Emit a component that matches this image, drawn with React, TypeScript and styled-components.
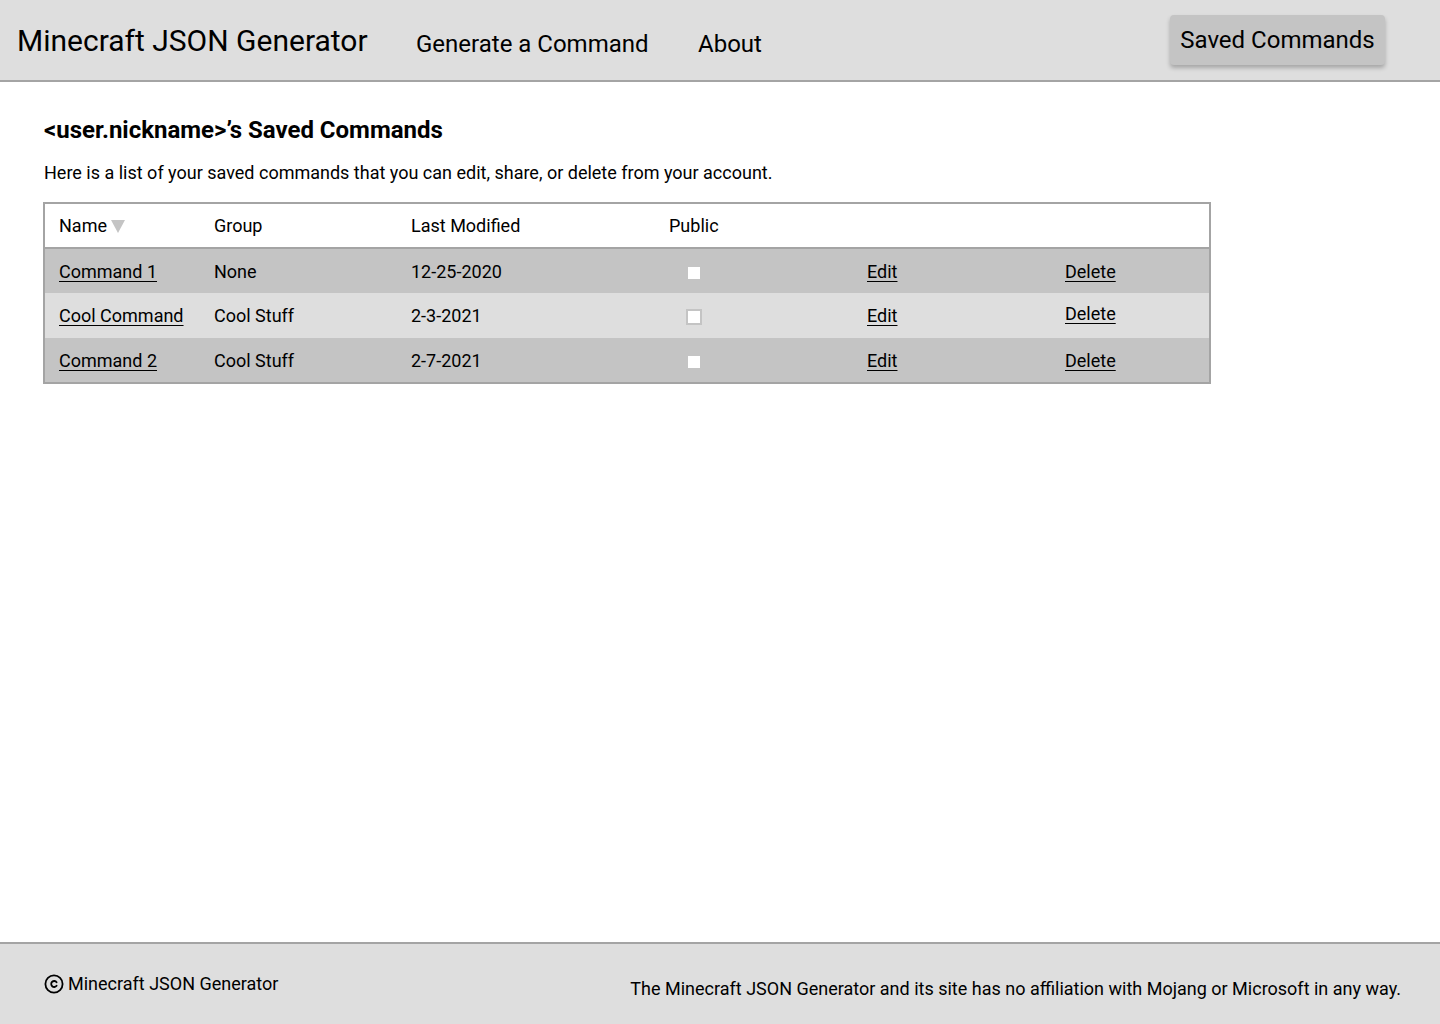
import React from 'react';
import styled, { createGlobalStyle } from 'styled-components';

const GlobalStyle = createGlobalStyle`
  html, body {
    margin: 0;
    padding: 0;
    background: #ffffff;
    font-family: Roboto, "Liberation Sans", sans-serif;
    color: #000000;
  }
  #root {
    min-height: 1024px;
  }
`;

const Page = styled.div`
  display: flex;
  flex-direction: column;
  min-height: 1024px;
`;

const Header = styled.header`
  display: flex;
  align-items: center;
  height: 80px;
  padding: 0 55px 0 17px;
  background: #dedede;
  border-bottom: 2px solid #a4a4a4;
  box-sizing: content-box;
`;

const Brand = styled.div`
  font-size: 30px;
  width: 399px;
  line-height: 1;
  margin-top: 2px;
  white-space: nowrap;
`;

const NavLink = styled.a`
  font-size: 24px;
  color: #000;
  text-decoration: none;
  margin-top: 7px;
  width: 282px;
  white-space: nowrap;
  &:last-of-type {
    width: auto;
  }
`;

const Spacer = styled.div`
  flex: 1;
`;

const SavedButton = styled.button`
  width: 215px;
  height: 50px;
  margin-top: 0;
  border: none;
  border-radius: 4px;
  background: #c4c4c4;
  box-shadow: 0 3px 4px rgba(0, 0, 0, 0.25);
  font-family: Roboto, "Liberation Sans", sans-serif;
  font-size: 24px;
  color: #000;
  padding: 0;
`;

const Main = styled.main`
  flex: 1;
  padding: 33px 44px 0 43px;
`;

const Title = styled.h1`
  margin: 0 0 0 1px;
  font-size: 24px;
  font-weight: 700;
  line-height: 30px;
`;

const Intro = styled.p`
  margin: 17px 0 18px 1px;
  font-size: 18px;
  line-height: 22px;
`;

const Table = styled.table`
  width: 1168px;
  table-layout: fixed;
  border-collapse: collapse;
  border: 2px solid #a4a4a4;
  font-size: 18px;
`;

const HeadRow = styled.tr`
  height: 45px;
  background: #ffffff;
  border-bottom: 2px solid #a4a4a4;
`;

const HeadCell = styled.th<{ $w?: number }>`
  text-align: left;
  font-weight: 400;
  padding: 0 0 0 14px;
  width: ${p => (p.$w ? `${p.$w}px` : 'auto')};
  box-sizing: border-box;
`;

const Row = styled.tr<{ $shade: 'dark' | 'light' }>`
  height: 45px;
  background: ${p => (p.$shade === 'dark' ? '#c4c4c4' : '#dedede')};
`;

const Cell = styled.td`
  padding: 0 0 0 14px;
  text-align: left;
  white-space: nowrap;
`;

const Link = styled.a<{ $raise?: boolean }>`
  color: #000;
  text-decoration: underline;
  text-underline-offset: 3px;
  position: relative;
  top: ${p => (p.$raise ? '-2px' : '0')};
`;

const SortArrow = styled.span`
  display: inline-block;
  width: 0;
  height: 0;
  margin-left: 4px;
  border-left: 7px solid transparent;
  border-right: 7px solid transparent;
  border-top: 13px solid #c4c4c4;
  vertical-align: -1px;
`;

const Check = styled.span<{ $outlined?: boolean }>`
  display: inline-block;
  width: 12px;
  height: 12px;
  background: #ffffff;
  border: ${p => (p.$outlined ? '2px solid #c4c4c4' : 'none')};
  margin-left: ${p => (p.$outlined ? '17px' : '19px')};
  vertical-align: middle;
`;

const Footer = styled.footer`
  display: flex;
  justify-content: space-between;
  align-items: center;
  height: 80px;
  padding: 0 39px 0 44px;
  background: #dedede;
  border-top: 2px solid #a4a4a4;
`;

const Copyright = styled.div`
  display: flex;
  align-items: center;
  gap: 4px;
  font-size: 18px;
  margin-top: -1px;
`;

const Disclaimer = styled.div`
  font-size: 18px;
  margin-top: 8px;
  white-space: nowrap;
`;

const rows = [
  { name: 'Command 1', group: 'None', date: '12-25-2020', shade: 'dark' as const },
  { name: 'Cool Command', group: 'Cool Stuff', date: '2-3-2021', shade: 'light' as const },
  { name: 'Command 2', group: 'Cool Stuff', date: '2-7-2021', shade: 'dark' as const },
];

const CopyIcon = () => (
  <svg width="20" height="20" viewBox="0 0 20 20">
    <circle cx="10" cy="10" r="8.6" fill="none" stroke="#000" strokeWidth="1.8" />
    <path
      d="M12.6 8.2 A3 3 0 1 0 12.6 11.8"
      fill="none"
      stroke="#000"
      strokeWidth="1.8"
      strokeLinecap="round"
    />
  </svg>
);

export default function App() {
  return (
    <Page>
      <GlobalStyle />
      <Header>
        <Brand>Minecraft JSON Generator</Brand>
        <NavLink>Generate a Command</NavLink>
        <NavLink>About</NavLink>
        <Spacer />
        <SavedButton>Saved Commands</SavedButton>
      </Header>

      <Main>
        <Title>&lt;user.nickname&gt;’s Saved Commands</Title>
        <Intro>
          Here is a list of your saved commands that you can edit, share, or delete from your account.
        </Intro>
        <Table>
          <thead>
            <HeadRow>
              <HeadCell $w={156}>
                Name
                <SortArrow />
              </HeadCell>
              <HeadCell $w={197}>Group</HeadCell>
              <HeadCell $w={258}>Last Modified</HeadCell>
              <HeadCell $w={198}>Public</HeadCell>
              <HeadCell $w={198} />
              <HeadCell />
            </HeadRow>
          </thead>
          <tbody>
            {rows.map((r, i) => (
              <Row key={r.name} $shade={r.shade}>
                <Cell>
                  <Link>{r.name}</Link>
                </Cell>
                <Cell>{r.group}</Cell>
                <Cell>{r.date}</Cell>
                <Cell>
                  <Check $outlined={i === 1} />
                </Cell>
                <Cell>
                  <Link>Edit</Link>
                </Cell>
                <Cell>
                  <Link $raise={i === 1}>Delete</Link>
                </Cell>
              </Row>
            ))}
          </tbody>
        </Table>
      </Main>

      <Footer>
        <Copyright>
          <CopyIcon />
          Minecraft JSON Generator
        </Copyright>
        <Disclaimer>
          The Minecraft JSON Generator and its site has no affiliation with Mojang or Microsoft in any way.
        </Disclaimer>
      </Footer>
    </Page>
  );
}
